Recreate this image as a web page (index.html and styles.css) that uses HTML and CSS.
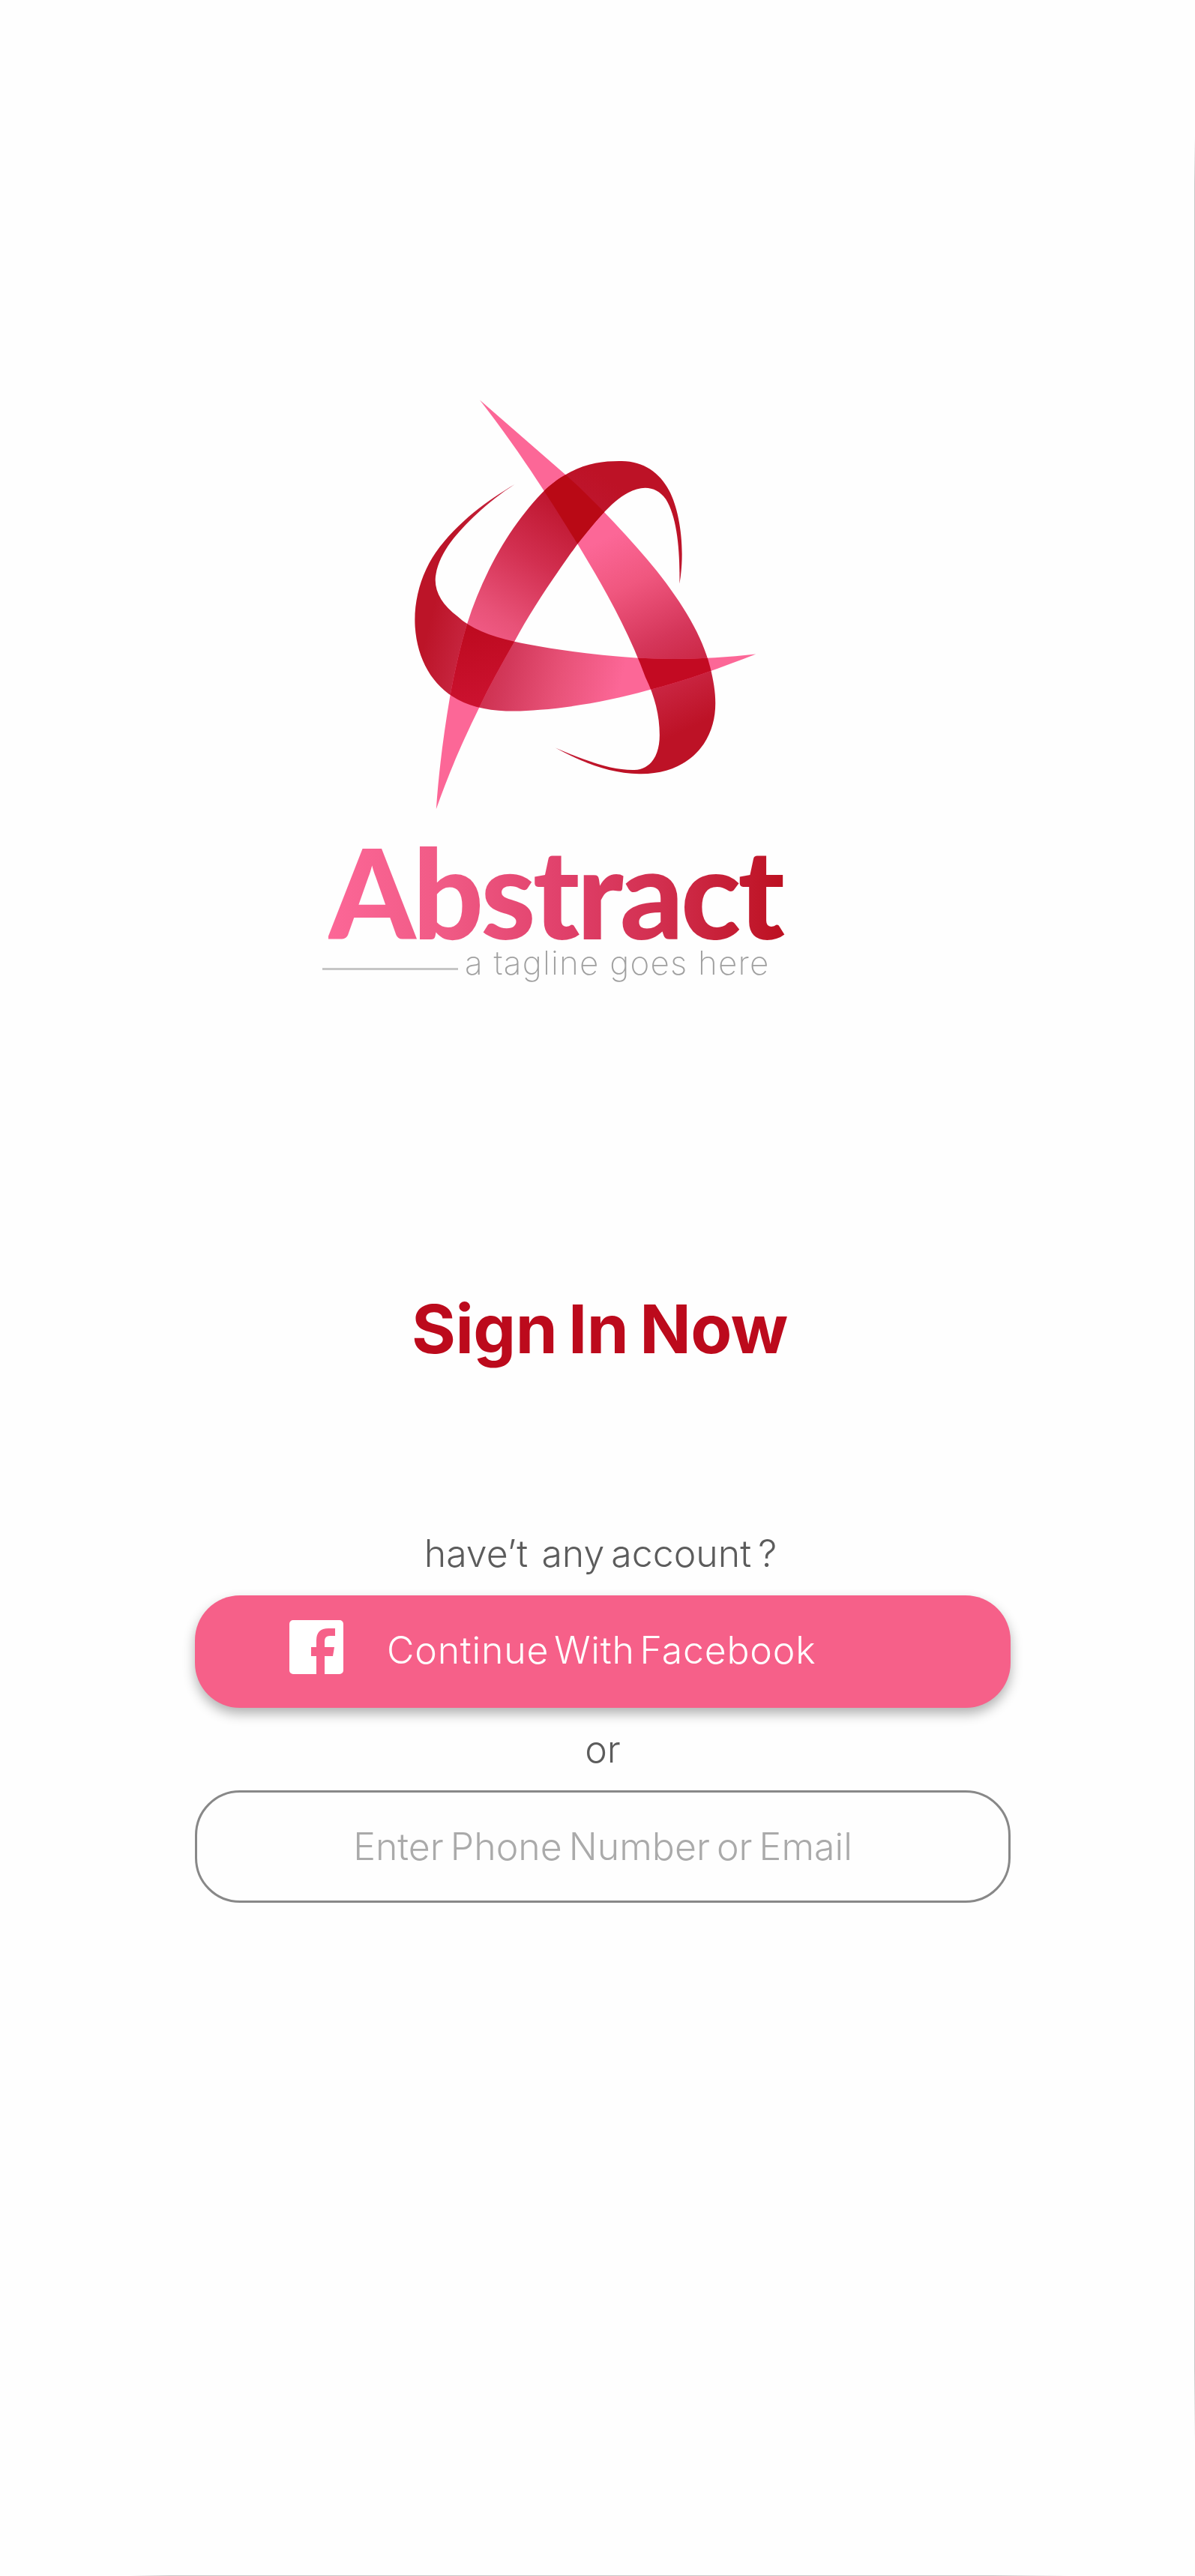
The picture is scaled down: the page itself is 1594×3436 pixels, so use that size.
FILE: index.html
```html
<!DOCTYPE html>
<html lang="en">
<head>
<meta charset="utf-8">
<title>Abstract - Sign In</title>
<link rel="stylesheet" href="styles.css">
</head>
<body>
<main class="page">
  <section class="brand">
    <svg class="mark" viewBox="0 0 1568 1568" preserveAspectRatio="none" aria-hidden="true">
      <defs>
        <linearGradient id="g1" gradientUnits="userSpaceOnUse" x1="950" y1="560" x2="1260" y2="1180">
          <stop offset="0" stop-color="#fc6797"/><stop offset=".25" stop-color="#f0577f"/><stop offset=".55" stop-color="#d5365a"/><stop offset="1" stop-color="#bd1226"/>
        </linearGradient>
        <linearGradient id="g2" gradientUnits="userSpaceOnUse" x1="510" y1="1000" x2="960" y2="340">
          <stop offset="0" stop-color="#fc6797"/><stop offset=".28" stop-color="#e85278"/><stop offset=".55" stop-color="#d22f50"/><stop offset=".8" stop-color="#bf1730"/><stop offset="1" stop-color="#bd1226"/>
        </linearGradient>
        <linearGradient id="g3" gradientUnits="userSpaceOnUse" x1="1020" y1="1030" x2="400" y2="880">
          <stop offset="0" stop-color="#fc6797"/><stop offset=".3" stop-color="#e85278"/><stop offset=".55" stop-color="#d43a5c"/><stop offset="1" stop-color="#bc1428"/>
        </linearGradient>
        <path id="ribbon1" d="M570 85 L840 335 C930 420 1050 555 1130 660 C1215 775 1275 880 1300 985 C1325 1090 1325 1170 1280 1245 C1235 1315 1160 1348 1075 1346 C980 1345 890 1305 810 1258 C890 1295 985 1335 1060 1333 C1115 1330 1140 1280 1140 1215 C1140 1150 1125 1085 1095 1020 C1040 860 965 720 880 570 C820 470 720 290 570 85Z"/>
        <path id="ribbon2" d="M432 1465 C440 1340 455 1215 475 1090 C490 1000 510 910 530 840 C580 670 670 500 780 385 C870 300 950 290 1020 291 C1090 292 1140 330 1170 390 C1205 460 1222 590 1203 705 C1205 590 1195 480 1160 420 C1130 375 1085 372 1040 398 C985 428 930 505 880 570 C800 690 735 790 680 900 C640 975 600 1050 565 1130 C510 1250 470 1350 432 1465Z"/>
        <path id="ribbon3" d="M680 370 C600 420 500 495 430 600 C385 670 360 760 365 850 C372 960 420 1050 500 1095 C570 1135 660 1140 760 1130 C880 1120 1000 1095 1100 1065 C1230 1030 1340 985 1445 942 C1320 958 1190 962 1065 955 C930 945 790 925 680 900 C600 880 540 855 500 815 C450 775 425 730 430 680 C440 600 500 530 560 470 C600 430 640 398 680 370Z"/>
        <clipPath id="clip1"><use href="#ribbon1"/></clipPath>
        <clipPath id="clip3"><use href="#ribbon3"/></clipPath>
        <linearGradient id="gx" gradientUnits="userSpaceOnUse" x1="500" y1="850" x2="560" y2="1120">
          <stop offset="0" stop-color="#bd0a1f"/><stop offset="1" stop-color="#cc1230"/>
        </linearGradient>
      </defs>
      <use href="#ribbon1" fill="url(#g1)"/>
      <use href="#ribbon3" fill="url(#g3)"/>
      <use href="#ribbon2" fill="url(#g2)"/>
      <use href="#ribbon2" clip-path="url(#clip1)" fill="#b90915"/>
      <use href="#ribbon2" clip-path="url(#clip3)" fill="url(#gx)"/>
      <use href="#ribbon1" clip-path="url(#clip3)" fill="#c30a22"/>
    </svg>
    <div class="wordmark">Abstract</div>
    <div class="tagline">
      <span class="tagline-rule"></span>
      <span class="tagline-text">a tagline goes here</span>
    </div>
  </section>

  <h1 class="title">Sign In Now</h1>

  <section class="signin">
    <p class="prompt">have’t&nbsp; any account ?</p>
    <button class="fb-button" type="button">
      <svg class="fb-icon" viewBox="0 0 72 72" aria-hidden="true">
        <path d="M5 0H67a5 5 0 0 1 5 5V67a5 5 0 0 1-5 5H47V48H58L60 36H47V28Q47 21 54 21H61V11H52Q36 11 36 27V36H29V48H36V72H5a5 5 0 0 1-5-5V5a5 5 0 0 1 5-5Z"/>
      </svg>
      <span class="fb-label">Continue With Facebook</span>
    </button>
    <p class="or">or</p>
    <div class="field">Enter Phone Number or Email</div>
  </section>
</main>
</body>
</html>
```
FILE: styles.css
```css
* { box-sizing: border-box; }

html, body { margin: 0; padding: 0; }

body {
  background: #fefefe;
  font-family: Inter, "Liberation Sans", sans-serif;
}

.page {
  position: relative;
  width: 1594px;
  height: 3436px;
  overflow: hidden;
  display: flex;
  flex-direction: column;
  align-items: center;
}

.page::before {
  content: "";
  position: absolute;
  right: 0;
  top: 183px;
  width: 1px;
  height: 3072px;
  background: linear-gradient(#fefefe, #c6c6c6 2%, #c6c6c6 97%, #fefefe);
}

.page::after {
  content: "";
  position: absolute;
  left: 175px;
  bottom: 0;
  width: 1250px;
  height: 1px;
  background: linear-gradient(90deg, #fefefe, #c8c8c8 4%, #c8c8c8 92%, #fefefe);
}

.brand {
  align-self: flex-start;
  margin: 500px 0 0 400px;
  width: 700px;
  display: flex;
  flex-direction: column;
}

.mark {
  display: block;
  width: 660px;
  height: 620px;
  filter: blur(.5px);
}

.wordmark {
  margin: 0 0 0 38px;
  width: 630px;
  height: 160px;
  font-family: Lato, sans-serif;
  font-size: 166px;
  line-height: 138px;
  font-weight: 900;
  letter-spacing: -4px;
  white-space: nowrap;
  background: linear-gradient(90deg, #fc6797 0%, #f05a85 25%, #e0406a 50%, #d22f4f 70%, #bc1020 97%);
  -webkit-background-clip: text;
  background-clip: text;
  color: transparent;
  filter: blur(.6px);
}

.tagline {
  display: flex;
  align-items: center;
  height: 50px;
  margin: -13px 0 0 30px;
  gap: 9px;
  filter: blur(.4px);
}

.tagline-rule {
  width: 181px;
  height: 3px;
  background: #c6c6c6;
}

.tagline-text {
  margin-top: -16px;
  font-size: 44px;
  line-height: 50px;
  font-weight: 200;
  letter-spacing: 1.2px;
  color: #a0a0a0;
  white-space: nowrap;
}

.title {
  align-self: flex-start;
  margin: 401px 0 0 549px;
  font-size: 90px;
  line-height: 110px;
  font-weight: 700;
  letter-spacing: -.5px;
  word-spacing: -6px;
  color: #bc0a1c;
}

.signin {
  align-self: flex-start;
  margin: 228px 0 0 260px;
  width: 1088px;
  display: flex;
  flex-direction: column;
  align-items: center;
}

.prompt {
  margin: 0 6px 0 0;
  height: 72px;
  font-size: 50px;
  line-height: 32px;
  font-weight: 300;
  word-spacing: -5px;
  color: #5c5c5c;
  white-space: nowrap;
}

.fb-button {
  width: 100%;
  height: 150px;
  padding: 0 0 0 126px;
  border: 0;
  border-radius: 60px;
  background: #f66089;
  box-shadow: 0 8px 16px rgba(0, 0, 0, .3);
  display: flex;
  align-items: center;
  gap: 58px;
  font-family: inherit;
  color: #fff;
}

.fb-icon {
  width: 72px;
  height: 72px;
  fill: #fff;
  flex: none;
  margin-top: -12px;
}

.fb-label {
  margin-top: -4px;
  font-size: 50px;
  font-weight: 300;
  letter-spacing: .8px;
  word-spacing: -8px;
  white-space: nowrap;
}

.or {
  margin: 0;
  height: 110px;
  font-size: 50px;
  line-height: 110px;
  font-weight: 300;
  color: #5c5c5c;
}

.field {
  width: 100%;
  height: 150px;
  border: 3px solid #888;
  border-radius: 60px;
  display: flex;
  align-items: center;
  justify-content: center;
  font-size: 50px;
  font-weight: 300;
  word-spacing: -5px;
  color: #aaa;
}
```
